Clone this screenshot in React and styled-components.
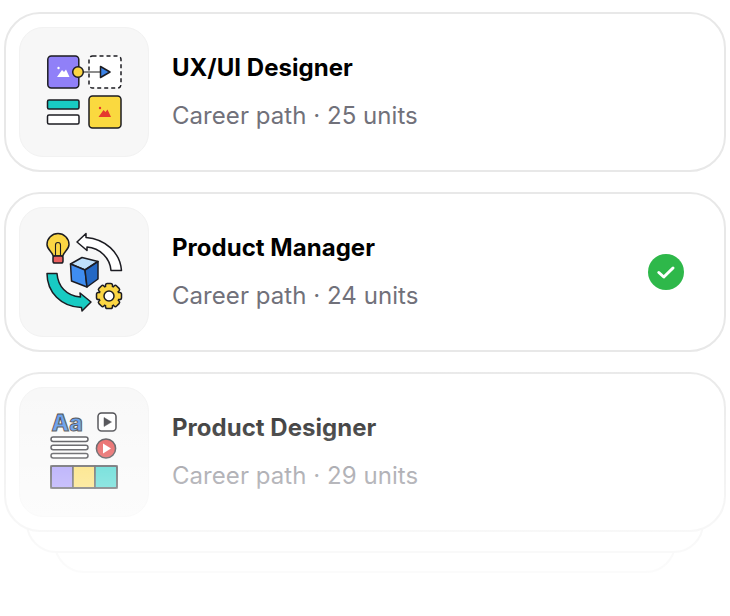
import React from "react";
import styled, { createGlobalStyle } from "styled-components";

const Global = createGlobalStyle`
  html, body { margin: 0; padding: 0; background: #fff; }
  body { font-family: Inter, "Liberation Sans", sans-serif; }
`;

const Page = styled.div`
  position: relative;
  width: 730px;
  height: 616px;
  padding: 12px 4px 0;
  box-sizing: border-box;
  overflow: hidden;
`;

const List = styled.div`
  display: flex;
  flex-direction: column;
  gap: 20px;
  margin-bottom: 1px;
`;

const Card = styled.div`
  position: relative;
  z-index: 3;
  display: flex;
  align-items: center;
  height: 160px;
  box-sizing: border-box;
  padding: 0 40px 0 13px;
  background: #fff;
  border: 2px solid #e8e8e8;
  border-radius: 36px;
`;

const Tile = styled.div`
  display: flex;
  align-items: center;
  justify-content: center;
  width: 130px;
  height: 130px;
  flex: none;
  background: #f7f7f7;
  border: 1px solid #f2f2f2;
  box-sizing: border-box;
  border-radius: 24px;
`;

const Info = styled.div`
  display: flex;
  flex-direction: column;
  gap: 16px;
  margin-left: 23px;
  flex: 1;
`;

const Title = styled.div`
  font-size: 24px;
  line-height: 32px;
  font-weight: 700;
  letter-spacing: 0.03px;
  color: #000;
`;

const Meta = styled.div`
  font-size: 24px;
  line-height: 32px;
  font-weight: 400;
  letter-spacing: 0.05px;
  color: #71717a;
`;

const Done = styled.div`
  display: flex;
  width: 36px;
  height: 36px;
  border-radius: 50%;
  background: #2eb84a;
  align-items: center;
  justify-content: center;
`;

const Peek = styled.div`
  position: relative;
  z-index: ${(p) => p.$layer};
  height: 60px;
  margin: -40px ${(p) => p.$inset}px 0;
  background: #fff;
  border: 2px solid #e8e8e8;
  border-radius: 36px;
  box-sizing: border-box;
`;

const Fade = styled.div`
  position: absolute;
  z-index: 5;
  left: 0;
  right: 0;
  top: 372px;
  bottom: 0;
  pointer-events: none;
  background: linear-gradient(to bottom, rgba(255, 255, 255, 0.08), #fff);
`;

const Ink = "#1c1c22";

const LayoutIcon = () => (
  <svg width="90" height="90" viewBox="39 47 90 90">
    <g stroke={Ink} strokeWidth="1.5">
      <rect x="47.8" y="56" width="31" height="32" rx="3.5" fill="#9080f8" />
      <rect x="89" y="56" width="32" height="32" rx="3.5" fill="#fff" strokeDasharray="4 3" />
      <line x1="83" y1="72" x2="101" y2="72" stroke="#666" />
      <path d="M100.5 66.5 L110 72 L100.5 77.5 Z" fill="#3b82e6" strokeLinejoin="round" />
      <circle cx="78" cy="72" r="5.3" fill="#fbd644" />
      <rect x="47.5" y="100" width="31.5" height="9" rx="1.5" fill="#18cbc3" />
      <rect x="47.5" y="115" width="31.5" height="9" rx="1.5" fill="#fff" />
      <rect x="89" y="96" width="32" height="32" rx="3.5" fill="#fad93f" />
    </g>
    <path d="M57 77 L62 70 L64 72 L66 69.5 L69.5 77 Z" fill="#fff" />
    <circle cx="58.5" cy="68" r="1.2" fill="#fff" />
    <path d="M98.5 117 L103.5 110 L105.5 112 L107.5 109.5 L111 117 Z" fill="#e5392e" />
    <circle cx="100" cy="108" r="1.2" fill="#e5392e" />
  </svg>
);

const gearTeeth = [0, 45, 90, 135, 180, 225, 270, 315];

const CycleIcon = () => (
  <svg width="90" height="90" viewBox="39 227 90 90">
    <g stroke={Ink} strokeWidth="1.5" strokeLinejoin="round">
      <path d="M53 256 C53 252 47 250 47 244.5 A11 11 0 0 1 69 244.5 C69 250 63 252 63 256 Z" fill="#fbd644" />
      <rect x="53" y="256" width="10" height="7" rx="1.8" fill="#ea5f5f" />
      <path d="M55.5 256 V245 M60.5 256 V245 M55.5 245 A2.5 2.5 0 1 1 60.5 245" fill="none" strokeWidth="1.1" />
      <path d="M77 242 L86 233.5 L86 237.5 C105 239 120 252 121.5 270.5 L111 270.5 C110 258 100 248 87 247 L87 250.5 Z" fill="#fff" />
      <path d="M47 273.5 L57 273.5 C58 286 66 296 80.5 297 L80 293 L91 302 L82 311 L81.5 307.5 C61 307 47 292 47 273.5 Z" fill="#18cbc3" />
      <path d="M70.5 264 L82 257.5 L98 261.5 L85 270 Z" fill="#bfe0fb" />
      <path d="M70.5 264 L85 270 L87 287 L71.5 281 Z" fill="#3f8df0" />
      <path d="M85 270 L98 261.5 L98 279 L87 287 Z" fill="#2468c4" />
      <g fill="#fbd644">
        {gearTeeth.map((a) => (
          <rect key={a} x="105.5" y="283.5" width="7" height="6" rx="1.8" transform={`rotate(${a} 109 296)`} />
        ))}
      </g>
      <circle cx="109" cy="296" r="9.5" fill="#fbd644" stroke="none" />
      <circle cx="109" cy="296" r="5" fill="#fff" />
    </g>
  </svg>
);

const MediaIcon = () => (
  <svg width="90" height="90" viewBox="39 407 90 90">
    <text x="51.5" y="431" fontFamily="Inter, sans-serif" fontWeight="800" fontSize="23" fill="#3b82e6" stroke={Ink} strokeWidth="1">Aa</text>
    <g stroke={Ink} strokeWidth="1.5">
      <rect x="98" y="413" width="18" height="18" rx="3.5" fill="#fff" />
      <path d="M104 417.5 L111.5 422 L104 426.5 Z" fill={Ink} strokeWidth="0.5" />
      <rect x="51" y="437" width="37" height="4.4" rx="2.2" fill="#fff" />
      <rect x="51" y="445.3" width="37" height="4.4" rx="2.2" fill="#fff" />
      <rect x="51" y="453.6" width="37" height="4.4" rx="2.2" fill="#fff" />
      <circle cx="106" cy="448.5" r="9.6" fill="#e02f2f" />
      <path d="M103 443.5 L111 448.5 L103 453.5 Z" fill="#fff" stroke="none" />
      <rect x="51" y="466" width="22" height="22" fill="#9080f8" />
      <rect x="73" y="466" width="22" height="22" fill="#fbd644" />
      <rect x="95" y="466" width="22" height="22" fill="#18cbc3" />
      <rect x="51" y="466" width="66" height="22" rx="2" fill="none" />
    </g>
  </svg>
);

const careers = [
  { id: 1, title: "UX/UI Designer", units: 25, Icon: LayoutIcon },
  { id: 2, title: "Product Manager", units: 24, Icon: CycleIcon, done: true },
  { id: 3, title: "Product Designer", units: 29, Icon: MediaIcon },
];

export default function App() {
  return (
    <Page>
      <Global />
      <List>
        {careers.map(({ id, title, units, Icon, done }) => (
          <Card key={id}>
            <Tile>
              <Icon />
            </Tile>
            <Info>
              <Title>{title}</Title>
              <Meta>Career path · {units} units</Meta>
            </Info>
            {done && (
              <Done>
                <svg width="20" height="20" viewBox="0 0 20 20">
                  <path d="M2.8 10.5 L7.8 15 L17 6" fill="none" stroke="#fff" strokeWidth="3" strokeLinecap="round" strokeLinejoin="round" />
                </svg>
              </Done>
            )}
          </Card>
        ))}
      </List>
      <Peek $inset={22} $layer={2} />
      <Peek $inset={50} $layer={1} />
      <Fade />
    </Page>
  );
}
